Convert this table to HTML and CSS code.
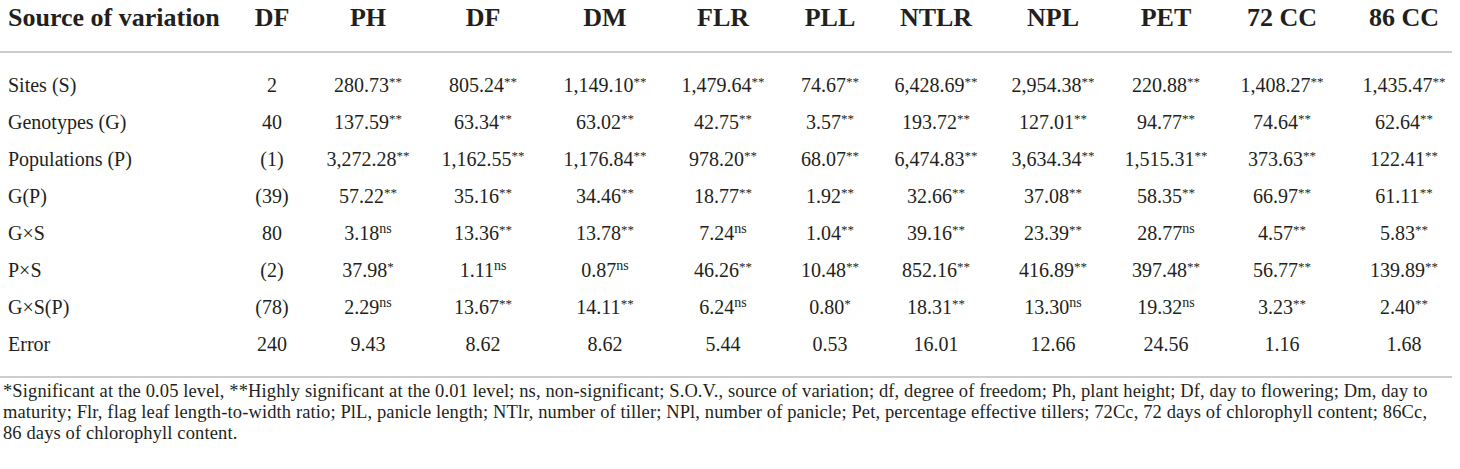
FILE: index.html
```html
<!DOCTYPE html>
<html lang="en">
<head>
    <meta charset="UTF-8">
    <meta name="viewport" content="width=device-width, initial-scale=1.0">
    <title>Analysis of variance</title>
    <link rel="stylesheet" href="styles.css">
</head>
<body>
    <div class="table-wrap">
        <table class="anova">
            <colgroup>
                <col class="c-source">
                <col class="c-df">
                <col class="c-ph">
                <col class="c-df2">
                <col class="c-dm">
                <col class="c-flr">
                <col class="c-pll">
                <col class="c-ntlr">
                <col class="c-npl">
                <col class="c-pet">
                <col class="c-72">
                <col class="c-86">
            </colgroup>
            <thead>
                <tr>
                    <th class="source">Source of variation</th>
                    <th>DF</th>
                    <th>PH</th>
                    <th>DF</th>
                    <th>DM</th>
                    <th>FLR</th>
                    <th>PLL</th>
                    <th>NTLR</th>
                    <th>NPL</th>
                    <th>PET</th>
                    <th>72 CC</th>
                    <th class="last">86 CC</th>
                </tr>
            </thead>
            <tbody>
                <tr>
                    <td class="source">Sites (S)</td>
                    <td>2</td>
                    <td>280.73<sup>**</sup></td>
                    <td>805.24<sup>**</sup></td>
                    <td>1,149.10<sup>**</sup></td>
                    <td>1,479.64<sup>**</sup></td>
                    <td>74.67<sup>**</sup></td>
                    <td>6,428.69<sup>**</sup></td>
                    <td>2,954.38<sup>**</sup></td>
                    <td>220.88<sup>**</sup></td>
                    <td>1,408.27<sup>**</sup></td>
                    <td class="last">1,435.47<sup>**</sup></td>
                </tr>
                <tr>
                    <td class="source">Genotypes (G)</td>
                    <td>40</td>
                    <td>137.59<sup>**</sup></td>
                    <td>63.34<sup>**</sup></td>
                    <td>63.02<sup>**</sup></td>
                    <td>42.75<sup>**</sup></td>
                    <td>3.57<sup>**</sup></td>
                    <td>193.72<sup>**</sup></td>
                    <td>127.01<sup>**</sup></td>
                    <td>94.77<sup>**</sup></td>
                    <td>74.64<sup>**</sup></td>
                    <td class="last">62.64<sup>**</sup></td>
                </tr>
                <tr>
                    <td class="source">Populations (P)</td>
                    <td>(1)</td>
                    <td>3,272.28<sup>**</sup></td>
                    <td>1,162.55<sup>**</sup></td>
                    <td>1,176.84<sup>**</sup></td>
                    <td>978.20<sup>**</sup></td>
                    <td>68.07<sup>**</sup></td>
                    <td>6,474.83<sup>**</sup></td>
                    <td>3,634.34<sup>**</sup></td>
                    <td>1,515.31<sup>**</sup></td>
                    <td>373.63<sup>**</sup></td>
                    <td class="last">122.41<sup>**</sup></td>
                </tr>
                <tr>
                    <td class="source">G(P)</td>
                    <td>(39)</td>
                    <td>57.22<sup>**</sup></td>
                    <td>35.16<sup>**</sup></td>
                    <td>34.46<sup>**</sup></td>
                    <td>18.77<sup>**</sup></td>
                    <td>1.92<sup>**</sup></td>
                    <td>32.66<sup>**</sup></td>
                    <td>37.08<sup>**</sup></td>
                    <td>58.35<sup>**</sup></td>
                    <td>66.97<sup>**</sup></td>
                    <td class="last">61.11<sup>**</sup></td>
                </tr>
                <tr>
                    <td class="source">G&times;S</td>
                    <td>80</td>
                    <td>3.18<sup class="ns">ns</sup></td>
                    <td>13.36<sup>**</sup></td>
                    <td>13.78<sup>**</sup></td>
                    <td>7.24<sup class="ns">ns</sup></td>
                    <td>1.04<sup>**</sup></td>
                    <td>39.16<sup>**</sup></td>
                    <td>23.39<sup>**</sup></td>
                    <td>28.77<sup class="ns">ns</sup></td>
                    <td>4.57<sup>**</sup></td>
                    <td class="last">5.83<sup>**</sup></td>
                </tr>
                <tr>
                    <td class="source">P&times;S</td>
                    <td>(2)</td>
                    <td>37.98<sup>*</sup></td>
                    <td>1.11<sup class="ns">ns</sup></td>
                    <td>0.87<sup class="ns">ns</sup></td>
                    <td>46.26<sup>**</sup></td>
                    <td>10.48<sup>**</sup></td>
                    <td>852.16<sup>**</sup></td>
                    <td>416.89<sup>**</sup></td>
                    <td>397.48<sup>**</sup></td>
                    <td>56.77<sup>**</sup></td>
                    <td class="last">139.89<sup>**</sup></td>
                </tr>
                <tr>
                    <td class="source">G&times;S(P)</td>
                    <td>(78)</td>
                    <td>2.29<sup class="ns">ns</sup></td>
                    <td>13.67<sup>**</sup></td>
                    <td>14.11<sup>**</sup></td>
                    <td>6.24<sup class="ns">ns</sup></td>
                    <td>0.80<sup>*</sup></td>
                    <td>18.31<sup>**</sup></td>
                    <td>13.30<sup class="ns">ns</sup></td>
                    <td>19.32<sup class="ns">ns</sup></td>
                    <td>3.23<sup>**</sup></td>
                    <td class="last">2.40<sup>**</sup></td>
                </tr>
                <tr>
                    <td class="source">Error</td>
                    <td>240</td>
                    <td>9.43</td>
                    <td>8.62</td>
                    <td>8.62</td>
                    <td>5.44</td>
                    <td>0.53</td>
                    <td>16.01</td>
                    <td>12.66</td>
                    <td>24.56</td>
                    <td>1.16</td>
                    <td class="last">1.68</td>
                </tr>
            </tbody>
        </table>
        <p class="footnote">*Significant at the 0.05 level, **Highly significant at the 0.01 level; ns, non-significant; S.O.V., source of variation; df, degree of freedom; Ph, plant height; Df, day to flowering; Dm, day to maturity; Flr, flag leaf length-to-width ratio; PlL, panicle length; NTlr, number of tiller; NPl, number of panicle; Pet, percentage effective tillers; 72Cc, 72 days of chlorophyll content; 86Cc, 86&nbsp;days of chlorophyll content.</p>
    </div>
</body>
</html>
```

FILE: styles.css
```css
body {
    margin: 0;
    background-color: #ffffff;
    color: #231f20;
    font-family: "Liberation Serif", "Times New Roman", serif;
}
.table-wrap {
    width: 1452px;
}
.anova {
    width: 100%;
    table-layout: fixed;
    border-collapse: collapse;
}
.c-source { width: 226px; }
.c-df { width: 92px; }
.c-ph { width: 100px; }
.c-df2 { width: 130px; }
.c-dm { width: 114px; }
.c-flr { width: 122px; }
.c-pll { width: 92px; }
.c-ntlr { width: 120px; }
.c-npl { width: 114px; }
.c-pet { width: 112px; }
.c-72 { width: 120px; }
.c-86 { width: 110px; }
.anova th {
    font-size: 26px;
    font-weight: bold;
    line-height: 30px;
    padding: 3px 0 18px;
    text-align: center;
    white-space: nowrap;
    border-bottom: 2px solid #cdcdcd;
}
.anova td {
    font-size: 20px;
    line-height: 37px;
    padding: 0;
    text-align: center;
    white-space: nowrap;
}
.anova .source {
    text-align: left;
    padding-left: 8px;
}
.anova .last {
    padding-left: 14px;
}
.anova tbody tr:first-child td {
    padding-top: 14px;
}
.anova tbody tr:last-child td {
    padding-bottom: 13px;
    border-bottom: 2px solid #cdcdcd;
}
.anova sup {
    font-size: 13px;
    line-height: 0;
    vertical-align: 6px;
}
.anova sup.ns {
    font-size: 14px;
    vertical-align: 7px;
}
.footnote {
    margin: 3px 0 0;
    padding-left: 3px;
    font-size: 18.5px;
    line-height: 21px;
    letter-spacing: 0.12px;
}
```
